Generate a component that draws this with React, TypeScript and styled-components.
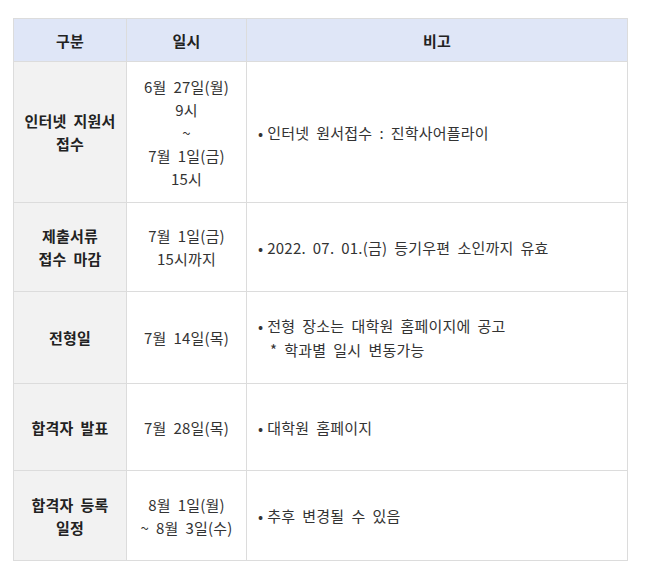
import { Fragment } from 'react';
import styled, { createGlobalStyle } from 'styled-components';

const GlobalStyle = createGlobalStyle`
  body {
    margin: 0;
    background: #ffffff;
    font-family: 'Noto Sans CJK KR', 'Noto Sans', sans-serif;
    color: #333333;
  }
`;

const schedule = [
  {
    label: ['인터넷 지원서', '접수'],
    date: ['6월 27일(월)', '9시', '~', '7월 1일(금)', '15시'],
    notes: [{ text: '인터넷 원서접수 : 진학사어플라이' }],
    height: 141,
  },
  {
    label: ['제출서류', '접수 마감'],
    date: ['7월 1일(금)', '15시까지'],
    notes: [{ text: '2022. 07. 01.(금) 등기우편 소인까지 유효' }],
    height: 89,
  },
  {
    label: ['전형일'],
    date: ['7월 14일(목)'],
    notes: [
      { text: '전형 장소는 대학원 홈페이지에 공고' },
      { text: '* 학과별 일시 변동가능', sub: true },
    ],
    height: 92,
  },
  {
    label: ['합격자 발표'],
    date: ['7월 28일(목)'],
    notes: [{ text: '대학원 홈페이지' }],
    height: 87,
  },
  {
    label: ['합격자 등록', '일정'],
    date: ['8월 1일(월)', '~ 8월 3일(수)'],
    notes: [{ text: '추후 변경될 수 있음' }],
    height: 90,
  },
];

const Page = styled.div`
  padding: 18px 22px 16px 13px;
`;

const Table = styled.table`
  width: 615px;
  border-collapse: collapse;
  table-layout: fixed;
  font-size: 15px;
  line-height: 23px;
  word-spacing: 3.5px;
  letter-spacing: 0.2px;
`;

const Row = styled.tr<{ $h: number }>`
  height: ${({ $h }) => $h}px;
`;

const Head = styled.th`
  background: #dfe6f7;
  border: 1px solid #dcdcdc;
  font-weight: 700;
  color: #222222;
  text-align: center;
  padding: 0;
`;

const Label = styled.td`
  background: #f2f2f2;
  border: 1px solid #dcdcdc;
  font-weight: 700;
  color: #222222;
  text-align: center;
  vertical-align: middle;
  padding: 0 4px;
`;

const DateCell = styled.td`
  border: 1px solid #dcdcdc;
  text-align: center;
  vertical-align: middle;
  padding: 0 2px;
`;

const NoteCell = styled.td`
  border: 1px solid #dcdcdc;
  vertical-align: middle;
  padding: 0 10px 0 11px;
`;

const Note = styled.div<{ $sub?: boolean }>`
  padding-left: ${({ $sub }) => ($sub ? '12px' : '0')};
  line-height: ${({ $sub }) => ($sub ? '25px' : '23px')};
`;

const Bullet = styled.span`
  margin-right: 4px;
`;

export default function App() {
  return (
    <Page>
      <GlobalStyle />
      <Table>
        <colgroup>
          <col style={{ width: 113 }} />
          <col style={{ width: 120 }} />
          <col />
        </colgroup>
        <thead>
          <Row $h={43}>
            <Head>구분</Head>
            <Head>일시</Head>
            <Head>비고</Head>
          </Row>
        </thead>
        <tbody>
          {schedule.map((item) => (
            <Row key={item.label.join(' ')} $h={item.height}>
              <Label>
                {item.label.map((line, i) => (
                  <Fragment key={i}>
                    {i > 0 && <br />}
                    {line}
                  </Fragment>
                ))}
              </Label>
              <DateCell>
                {item.date.map((line, i) => (
                  <Fragment key={i}>
                    {i > 0 && <br />}
                    {line}
                  </Fragment>
                ))}
              </DateCell>
              <NoteCell>
                {item.notes.map((note) => (
                  <Note key={note.text} $sub={note.sub}>
                    {!note.sub && <Bullet>•</Bullet>}
                    {note.text}
                  </Note>
                ))}
              </NoteCell>
            </Row>
          ))}
        </tbody>
      </Table>
    </Page>
  );
}
